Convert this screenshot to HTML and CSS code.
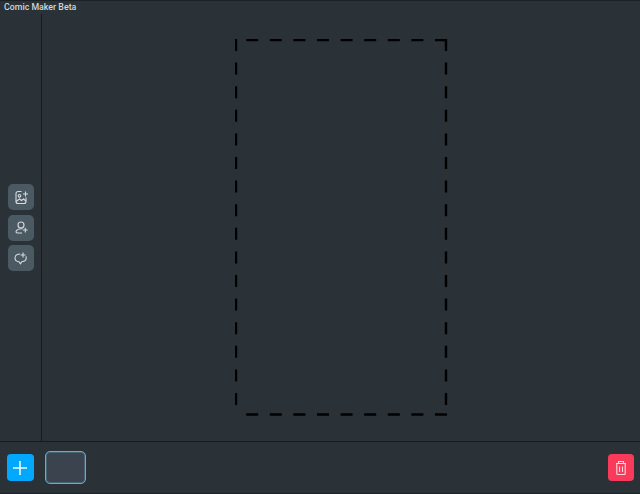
FILE: index.html
```html
<!DOCTYPE html>
<html lang="en">
<head>
    <meta charset="UTF-8">
    <title>Comic Maker Beta</title>
    <link rel="stylesheet" href="styles.css">
</head>
<body>
    <div class="app">
        <div class="title-bar">Comic Maker Beta</div>

        <div class="workspace">
            <!-- Left tools -->
            <div class="sidebar">
                <button class="tool-btn">
                    <svg viewBox="0 0 16 16" class="tool-icon">
                        <path d="M8.500 2.500H5a2 2 0 0 0-2 2v8a2 2 0 0 0 2 2h6a2 2 0 0 0 2-2V8.500"/>
                        <circle cx="6.500" cy="6.800" r="1.300"/>
                        <path d="M3 12.500l3.500-2.500 2 1.500 2-1.500 2.500 2"/>
                        <path d="M12.500 2.500v5M10 5h5"/>
                    </svg>
                </button>
                <button class="tool-btn">
                    <svg viewBox="0 0 16 16" class="tool-icon">
                        <circle cx="8" cy="5" r="3"/>
                        <path d="M9 13H4.500c-1.200 0-1.800-.9-1.300-1.900C4 9.700 5.800 8.800 8 8.800c.6 0 1.100.1 1.600.2"/>
                        <path d="M12.300 7.800v4.600M10 10h4.600"/>
                    </svg>
                </button>
                <button class="tool-btn">
                    <svg viewBox="0 0 16 16" class="tool-icon">
                        <path d="M7 4C4 4.200 2 5.800 2 8c0 2 1.700 3.500 4 3.800l1.500 2 1.300-2c2.500-.3 4.400-1.800 4.400-3.800 0-.6-.1-1.100-.4-1.600"/>
                        <path d="M10 2.500v5M7.500 5h5"/>
                    </svg>
                </button>
            </div>

            <!-- Page canvas -->
            <div class="stage">
                <svg class="page-outline" width="213" height="378" viewBox="0 0 213 378">
                    <path d="M1 0V370M212 1H8M211 0V370M212 375.500H8"/>
                </svg>
            </div>
        </div>

        <!-- Page strip -->
        <div class="footer">
            <button class="add-btn">
                <svg viewBox="0 0 16 16" class="add-icon"><path d="M8 1v14M1 8h14"/></svg>
            </button>
            <div class="page-thumb"></div>
            <button class="delete-btn">
                <svg viewBox="0 0 16 16" class="trash-icon">
                    <path d="M3 3.500h10M5.500 3.500V1.500h5v2"/>
                    <path d="M3.800 3.500v10a1 1 0 0 0 1 1h6.400a1 1 0 0 0 1-1v-10"/>
                    <path d="M6.500 6.500v5.500M9.500 6.500v5.500"/>
                </svg>
            </button>
        </div>
    </div>
</body>
</html>
```

FILE: styles.css
```css
* {
    box-sizing: border-box;
}

html, body {
    margin: 0;
    height: 100%;
    overflow: hidden;
}

body {
    font-family: "Roboto", "Liberation Sans", sans-serif;
    background: #2a3238;
    color: #cfd6dc;
}

.app {
    display: flex;
    flex-direction: column;
    height: 494px;
    border-top: 1px solid #1c2126;
    border-bottom: 1px solid #1c2126;
}

.title-bar {
    height: 13px;
    padding-left: 4px;
    font-size: 8.8px;
    font-weight: 500;
    line-height: 13px;
}

.workspace {
    flex: 1;
    display: flex;
    min-height: 0;
}

.sidebar {
    width: 42px;
    display: flex;
    flex-direction: column;
    justify-content: center;
    gap: 4.5px;
    padding-left: 8px;
    border-right: 1px solid #171b1f;
}

.tool-btn {
    width: 26px;
    height: 26px;
    padding: 0;
    display: flex;
    align-items: center;
    justify-content: center;
    background: #4b5963;
    border: 0;
    border-radius: 5px;
}

.tool-icon {
    width: 16px;
    height: 16px;
    fill: none;
    stroke: #d5dade;
    stroke-width: 1.1;
}

.stage {
    flex: 1;
    padding: 25px 0 0 193px;
}

.page-outline {
    display: block;
    fill: none;
    stroke: #000;
    stroke-width: 2.4;
    stroke-dasharray: 12 11.6;
}

.footer {
    height: 52px;
    display: flex;
    align-items: center;
    padding: 0 6px 0 7px;
    border-top: 1px solid #171b1f;
}

.add-btn,
.delete-btn {
    height: 27px;
    padding: 0;
    display: flex;
    align-items: center;
    justify-content: center;
    border: 0;
    border-radius: 4px;
}

.add-btn {
    width: 27px;
    background: #00a8ff;
}

.add-icon {
    width: 16px;
    height: 16px;
    margin-right: 1px;
    fill: none;
    stroke: #eef8ff;
    stroke-width: 1.6;
}

.page-thumb {
    width: 41px;
    height: 33px;
    margin-left: 11px;
    background: #3b444e;
    border: 1px solid #5ab0dc;
    border-radius: 5px;
    box-shadow: inset 0 0 0 1px rgba(90, 176, 220, 0.3);
}

.delete-btn {
    width: 26px;
    margin-left: auto;
    background: #f93a5a;
}

.trash-icon {
    width: 16px;
    height: 16px;
    fill: none;
    stroke: #ffd9df;
    stroke-width: 1.1;
}
```
